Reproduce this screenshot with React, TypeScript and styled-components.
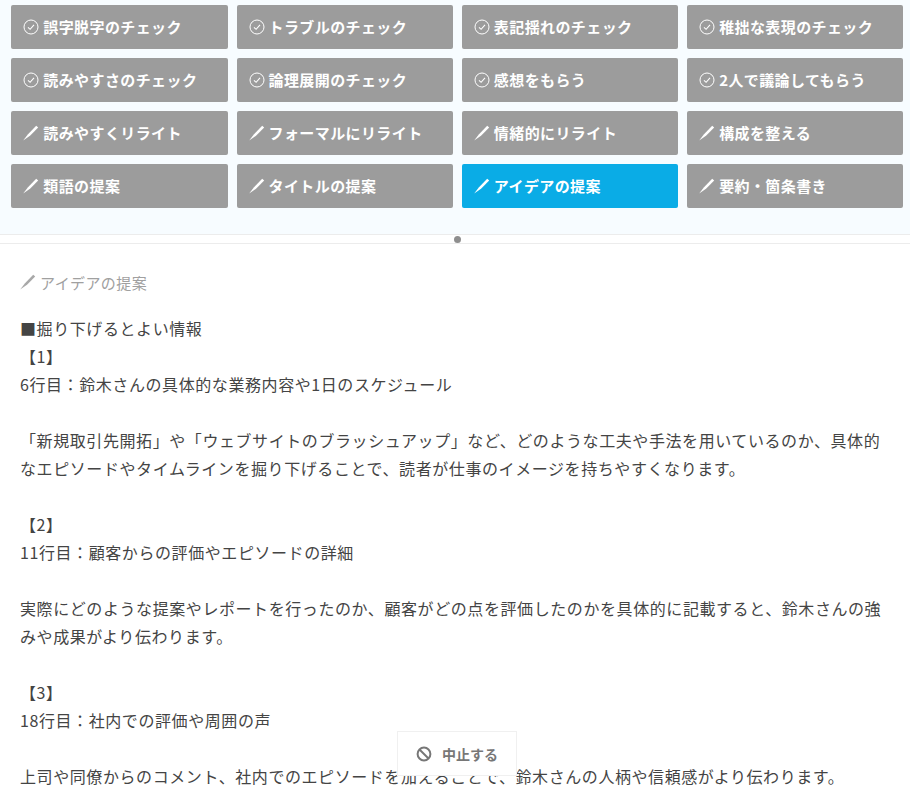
import styled, { createGlobalStyle } from 'styled-components';

const GlobalStyle = createGlobalStyle`
  html, body {
    margin: 0;
    padding: 0;
    height: 799px;
    overflow: hidden;
    background: #fff;
    font-family: 'Noto Sans CJK JP', 'Noto Sans', sans-serif;
  }
`;

const Page = styled.div`
  position: relative;
  width: 910px;
  height: 799px;
  overflow: hidden;
`;

const ToolPanel = styled.div`
  display: grid;
  grid-template-columns: repeat(4, 1fr);
  gap: 9px;
  height: 234px;
  box-sizing: border-box;
  padding: 5px 6.6px 0 11.3px;
  grid-auto-rows: 44px;
  background: #f7fcff;
`;

const ToolButton = styled.button<{ $active?: boolean }>`
  display: flex;
  align-items: center;
  gap: 4px;
  padding: 0 0 2px 12px;
  border: 0;
  border-radius: 2px;
  background: ${(p) => (p.$active ? '#0aace6' : '#9c9c9c')};
  color: #fff;
  font-family: inherit;
  font-size: 15px;
  font-weight: 700;
  letter-spacing: 0.4px;
  white-space: nowrap;

  svg {
    margin-top: 2px;
  }
`;

const Divider = styled.div`
  position: relative;
  height: 8px;
  border-top: 1px solid #ececec;
  border-bottom: 1px solid #ececec;
  background: #fff;
`;

const Handle = styled.span`
  position: absolute;
  left: 454px;
  top: 1px;
  width: 7px;
  height: 7px;
  border-radius: 50%;
  background: #8e8e8e;
`;

const Result = styled.div`
  padding: 28px 20px 0 20px;
`;

const ResultTitle = styled.div`
  display: flex;
  align-items: center;
  gap: 4px;
  height: 20px;
  color: #a0a0a0;
  font-size: 15px;
  letter-spacing: 0.4px;
`;

const ResultBody = styled.div`
  margin-top: 22px;
  color: #444;
  font-size: 16px;
  line-height: 28px;
  letter-spacing: 0.58px;
  white-space: pre-wrap;
`;

const StopButton = styled.button`
  position: absolute;
  left: 397px;
  top: 731px;
  display: flex;
  align-items: center;
  justify-content: center;
  gap: 10px;
  width: 120px;
  height: 45px;
  box-sizing: border-box;
  padding: 0;
  border: 1px solid #f0f0f0;
  background: #fff;
  color: #777;
  font-family: inherit;
  font-size: 14px;
  font-weight: 700;
`;

const CheckIcon = () => (
  <svg width="16" height="16" viewBox="0 0 16 16" fill="none" stroke="#fff">
    <circle cx="8" cy="8" r="7" strokeWidth="1" />
    <path d="M5 8.3 L7.1 10.3 L11 5.9" strokeWidth="1.1" />
  </svg>
);

const PenIcon = ({ color = '#fff' }: { color?: string }) => (
  <svg width="16" height="16" viewBox="0 0 16 16">
    <path d="M0.2 15.6 L5 9.2 L13.2 0.8 L15.2 2.6 L7 10.8 Z" fill={color} />
  </svg>
);

const BanIcon = () => (
  <svg width="16" height="16" viewBox="0 0 16 16" fill="none" stroke="#777" strokeWidth="2">
    <circle cx="8" cy="8" r="6.4" />
    <path d="M3.5 3.5 L12.5 12.5" />
  </svg>
);

const tools = [
  { label: '誤字脱字のチェック', kind: 'check' },
  { label: 'トラブルのチェック', kind: 'check' },
  { label: '表記揺れのチェック', kind: 'check' },
  { label: '稚拙な表現のチェック', kind: 'check' },
  { label: '読みやすさのチェック', kind: 'check' },
  { label: '論理展開のチェック', kind: 'check' },
  { label: '感想をもらう', kind: 'check' },
  { label: '2人で議論してもらう', kind: 'check' },
  { label: '読みやすくリライト', kind: 'pen' },
  { label: 'フォーマルにリライト', kind: 'pen' },
  { label: '情緒的にリライト', kind: 'pen' },
  { label: '構成を整える', kind: 'pen' },
  { label: '類語の提案', kind: 'pen' },
  { label: 'タイトルの提案', kind: 'pen' },
  { label: 'アイデアの提案', kind: 'pen', active: true },
  { label: '要約・箇条書き', kind: 'pen' },
];

const resultText = `■掘り下げるとよい情報
【1】
6行目：鈴木さんの具体的な業務内容や1日のスケジュール

「新規取引先開拓」や「ウェブサイトのブラッシュアップ」など、どのような工夫や手法を用いているのか、具体的なエピソードやタイムラインを掘り下げることで、読者が仕事のイメージを持ちやすくなります。

【2】
11行目：顧客からの評価やエピソードの詳細

実際にどのような提案やレポートを行ったのか、顧客がどの点を評価したのかを具体的に記載すると、鈴木さんの強みや成果がより伝わります。

【3】
18行目：社内での評価や周囲の声

上司や同僚からのコメント、社内でのエピソードを加えることで、鈴木さんの人柄や信頼感がより伝わります。`;

function App() {
  return (
    <Page>
      <GlobalStyle />
      <ToolPanel>
        {tools.map((tool) => (
          <ToolButton key={tool.label} $active={tool.active}>
            {tool.kind === 'check' ? <CheckIcon /> : <PenIcon />}
            {tool.label}
          </ToolButton>
        ))}
      </ToolPanel>
      <Divider>
        <Handle />
      </Divider>
      <Result>
        <ResultTitle>
          <PenIcon color="#a8a8a8" />
          アイデアの提案
        </ResultTitle>
        <ResultBody>{resultText}</ResultBody>
      </Result>
      <StopButton>
        <BanIcon />
        中止する
      </StopButton>
    </Page>
  );
}

export default App;
